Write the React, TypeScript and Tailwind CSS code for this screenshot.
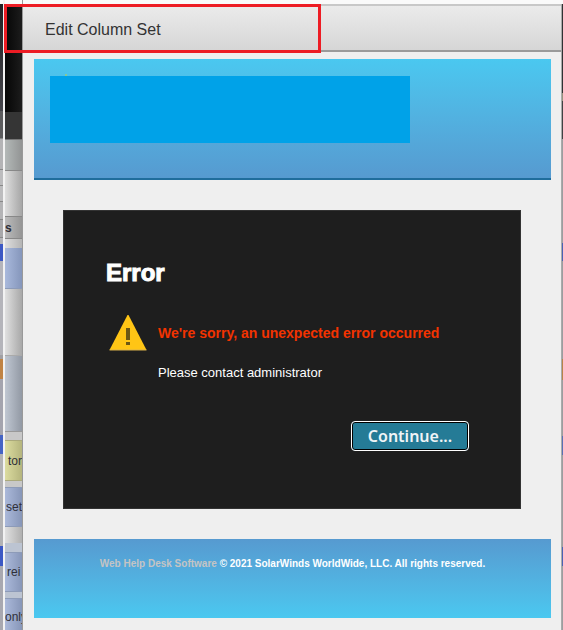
interface Row {
  className: string;
  label?: string;
}

// Slices of the page that stay visible behind the dialog, top to bottom
const outerRows: Row[] = [
  { className: 'h-[107px] bg-linear-to-b from-[#202024] to-[#44444a]' },
  { className: 'h-7 bg-[#5c5c5e] border-b border-[#888]' },
  { className: 'h-[31px] bg-[#b4b4b6] border-b border-[#888]' },
  { className: 'h-4 bg-[#bcbcbe] border-b border-[#888]' },
  { className: 'h-4 bg-[#bcbcbe] border-b border-[#888]' },
  { className: 'h-[18px] bg-[#b4b4b6] border-b border-[#888]' },
  { className: 'h-[18px] bg-[#a8a8aa] border-b border-[#888]' },
  { className: 'h-1.5 bg-[#b4b4b8]' },
  { className: 'h-[17px] bg-[#3c58c4]' },
  { className: 'h-[94px] bg-[#b4b4ba]' },
  { className: 'h-1 bg-[#a0a0a4]' },
  { className: 'h-5 bg-[#c08344]' },
  { className: 'h-14 bg-[#a4a4ae]' },
  { className: 'h-[19px] bg-[#4564c4]' },
  { className: 'h-[92px] bg-[#b2b2b4]' },
  { className: 'h-5 bg-[#3c58c4]' },
  { className: 'flex-1 bg-[#a8a8b0]' },
];

const innerRows: Row[] = [
  { className: 'h-[108px] bg-linear-to-r from-[#070707] to-[#1c1c1c]' },
  { className: 'h-7 bg-[#353535] border-b border-[#777]' },
  { className: 'h-[31px] bg-linear-to-r from-[#b4b9b8] to-[#929494] border-b border-[#888]' },
  { className: 'h-[46px] bg-linear-to-r from-[#dedede] to-[#a6a6a6] border-b border-[#888]' },
  { className: 'h-[22px] bg-linear-to-r from-[#bcbcbc] to-[#959595] border-b border-[#888] font-bold', label: 's' },
  { className: 'h-[9px] bg-linear-to-r from-[#dedede] to-[#b4b4b4]' },
  { className: 'h-[41px] bg-linear-to-r from-[#a9b9dc] to-[#8596bb] border-b border-[#8d9bb8]' },
  { className: 'h-[67px] bg-linear-to-r from-[#e0e0e0] to-[#a8a8a8] border-b border-[#aaa]' },
  { className: 'h-[76px] bg-linear-to-r from-[#c0c7d2] to-[#9299a4] border-b border-[#999]' },
  { className: 'h-2 bg-[#c8c8c8]' },
  { className: 'h-[41px] bg-linear-to-r from-[#dcdca0] to-[#b5b57d] border-y border-[#aaa97c] pl-[3px]', label: 'tor' },
  { className: 'h-1.5 bg-[#c8c8c8]' },
  { className: 'h-10 bg-linear-to-r from-[#abb9da] to-[#8796b8] border-y border-[#8d9bb8] pl-px', label: 'set' },
  { className: 'h-4 bg-linear-to-r from-[#e0e0e0] to-[#b0b0b0]' },
  { className: 'h-[9px] bg-[#bcc4d2]' },
  { className: 'h-10 bg-linear-to-r from-[#abb9da] to-[#8796b8] border-y border-[#8d9bb8] pl-0.5', label: 'rei' },
  { className: 'h-1.5 bg-[#bcc4d2]' },
  { className: 'flex-1 bg-linear-to-r from-[#abb9da] to-[#8796b8] border-t border-[#8d9bb8] pt-1', label: 'only' },
];

const edgeRows: Row[] = [
  { className: 'h-[89px] bg-[#303234]' },
  { className: 'h-2 bg-[#96917c]' },
  { className: 'h-[38px] bg-[#404244]' },
  { className: 'h-[104px] bg-[#9b9d9f]' },
  { className: 'h-[18px] bg-[#4a62b4]' },
  { className: 'h-[98px] bg-[#9b9d9f]' },
  { className: 'h-[21px] bg-[#b88448]' },
  { className: 'h-14 bg-[#9b9d9f]' },
  { className: 'h-[19px] bg-[#5a70b4]' },
  { className: 'h-[92px] bg-[#9b9d9f]' },
  { className: 'h-[19px] bg-[#4a62b4]' },
  { className: 'flex-1 bg-[#9b9d9f]' },
];

function Strip({ rows, className }: { rows: Row[]; className: string }) {
  return (
    <div className={`flex shrink-0 flex-col overflow-hidden pt-1 ${className}`}>
      {rows.map((row, i) => (
        <div
          key={i}
          className={`flex shrink-0 items-center overflow-hidden text-xs text-[#303038] ${row.className}`}
        >
          {row.label}
        </div>
      ))}
    </div>
  );
}

function WarningIcon() {
  return (
    <svg width="38" height="36" viewBox="0 0 38 36" className="shrink-0" aria-hidden="true">
      <path d="M18.500 0h1L37.500 35H0.500Z" fill="#ffc515" />
      <path d="M0.500 35h37" stroke="#d8b04a" strokeWidth="1" />
      <path d="M17 13h4v12h-4zM17 27h4v3h-4z" fill="#6b5714" />
    </svg>
  );
}

export default function App() {
  return (
    <div className="relative flex min-h-screen overflow-hidden bg-[#fafafa] font-['Liberation_Sans',Arial,sans-serif]">
      <Strip rows={outerRows} className="w-[3px]" />
      <div className="w-0.5 shrink-0 bg-[#f2f2f2]" />
      <Strip rows={innerRows} className="w-[18px] border-r border-[#999]" />

      <div className="min-w-0 flex-1 pt-1">
        <div className="flex min-h-full flex-col border-r border-[#aaa] bg-[#efefef]">
          <header className="flex h-12 items-center border-t-2 border-b-2 border-t-[#c8c8c8] border-b-[#9a9a9a] bg-linear-to-b from-[#ebebeb] to-[#d6d6d6] px-[22px] pt-1">
            <h1 className="text-base text-[#333]">Edit Column Set</h1>
          </header>

          <main className="pt-[7px] pr-2.5 pb-3 pl-[11px]">
            <div className="h-[121px] border-b-2 border-[#1f6d9c] bg-linear-to-b from-[#4ac8f0] to-[#569ad0] px-4 pt-[15px]">
              <div className="ml-[15px] h-0.5 w-0.5 bg-[#8cc890]" />
              <div className="h-[67px] w-[360px] max-w-full bg-[#00a2e8]" />
            </div>

            <section className="mt-[30px] mr-[30px] ml-[29px] border border-[#333] bg-[#1e1e1e] px-[42px] pt-12 pb-[57px] text-white">
              <h2 className="text-2xl leading-7 font-bold [-webkit-text-stroke:1px_white]">Error</h2>
              <div className="mt-7 flex items-start gap-[11px] pl-[3px]">
                <WarningIcon />
                <div className="pt-2">
                  <p className="text-sm leading-5 font-bold text-[#f23300]">
                    We're sorry, an unexpected error occurred
                  </p>
                  <p className="mt-5 text-[13px] leading-5">Please contact administrator</p>
                </div>
              </div>
              <div className="mt-[38px] flex justify-end pr-[9px]">
                <button
                  type="button"
                  className="h-[30px] w-[118px] rounded border border-white bg-[#257b96] font-['Noto_Sans',sans-serif] text-base leading-6 font-semibold text-[#f0f4f6] inset-ring inset-ring-black"
                >
                  Continue...
                </button>
              </div>
            </section>

            <footer className="mt-[30px] h-[79px] bg-linear-to-b from-[#569ad0] to-[#4ac8f0] pt-[17px] text-center text-[10px] leading-4 font-bold text-white">
              <a href="#" className="text-[#c4c4c4]">
                Web Help Desk Software
              </a>{' '}
              © 2021 SolarWinds WorldWide, LLC. All rights reserved.
            </footer>
          </main>
        </div>
      </div>

      <Strip rows={edgeRows} className="w-px" />

      {/* highlight around the dialog title */}
      <div className="pointer-events-none absolute top-1 left-1 h-[49px] w-[317px] border-[3px] border-[#ed1c24]" />
    </div>
  );
}
